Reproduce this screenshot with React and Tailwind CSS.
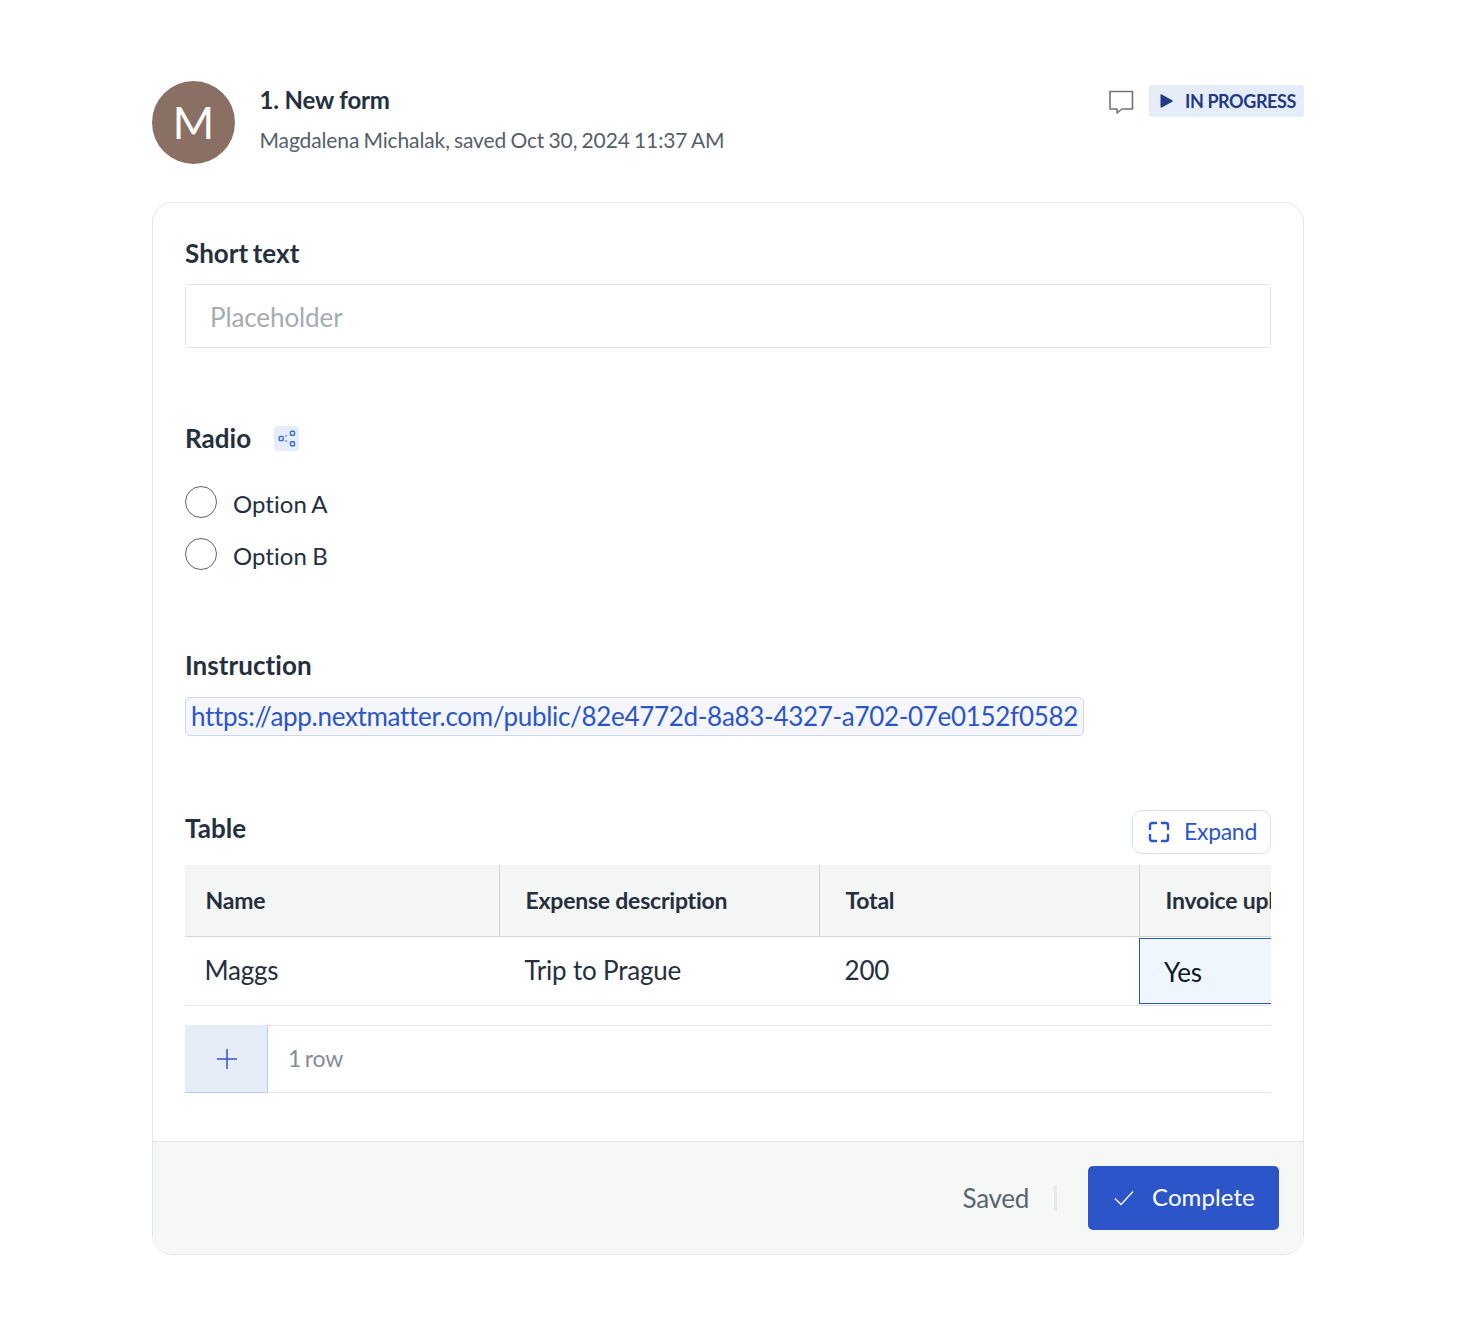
import React from "react";

function Label({ children }) {
  return <div className="text-[26px] leading-[30px] pb-[2px] font-bold text-[#252f3d] tracking-[0.05px] [word-spacing:-2px]">{children}</div>;
}

function Radio({ label }) {
  return (
    <div className="flex items-center h-[32px] gap-[16px]">
      <span className="w-[32px] h-[32px] rounded-full border border-[#5b6570] bg-white" />
      <span className="text-[24px] leading-[32px] text-[#252f3d] tracking-[0.05px] [word-spacing:-1px] mt-[4px]">{label}</span>
    </div>
  );
}

function HeadCell({ className, children }) {
  return (
    <div className={`shrink-0 h-full flex items-center pl-[25.5px] text-[23px] font-bold text-[#252f3d] tracking-[-0.22px] whitespace-nowrap border-r border-[#d2d5d7] ${className}`}>
      {children}
    </div>
  );
}

function BodyCell({ className, children }) {
  return (
    <div className={`shrink-0 h-full flex items-center pl-[24.5px] pb-[2px] text-[26px] text-[#252f3d] tracking-[-0.2px] ${className}`}>
      {children}
    </div>
  );
}

export default function App() {
  return (
    <div className="min-h-[1328px] bg-white pt-[81px] pl-[152px] pr-[158px] font-['Lato',sans-serif]">
      <header className="flex h-[83px]">
        <div className="w-[83px] h-[83px] rounded-full bg-[#8a6f64] flex items-center justify-center text-white text-[45px] shrink-0">M</div>
        <div className="ml-[24.5px] pt-[4px]">
          <div className="text-[24px] leading-[30px] pb-[2px] font-bold text-[#252f3d] tracking-[-0.15px]">1. New form</div>
          <div className="mt-[8px] text-[21px] leading-[30px] pb-[2px] text-[#56606b] tracking-[-0.12px] [word-spacing:-1px]">Magdalena Michalak, saved Oct 30, 2024 11:37 AM</div>
        </div>
        <div className="ml-auto flex items-start pt-[4px]">
          <svg className="mt-[4px] mr-[15px]" width="26" height="26" viewBox="0 0 26 26" fill="none" stroke="#6b7580" strokeWidth="1.6" strokeLinejoin="round">
            <path d="M2 2.5h22.5v17.5H14l-5 4v-4H2z" />
          </svg>
          <div className="h-[32px] w-[155px] rounded-[3px] bg-[#e6edf8] flex items-center pl-[11px] text-[#1f3b82] text-[18px] font-bold tracking-[-0.4px] whitespace-nowrap">
            <svg width="13" height="14" viewBox="0 0 13 14" fill="#1f3b82"><path d="M0.5 1.2c0-.7.7-1.1 1.3-.8l10.4 5.8c.6.4.6 1.2 0 1.6L1.8 13.6c-.6.3-1.3-.1-1.3-.8z" /></svg>
            <span className="ml-[12px]">IN PROGRESS</span>
          </div>
        </div>
      </header>

      <main className="mt-[38px] h-[1053px] rounded-[20px] border border-[#e4e7e9] overflow-hidden flex flex-col bg-white">
        <div className="flex-1 min-h-0 pl-[32px] pr-[32px] pt-[35px]">
          <Label>Short text</Label>
          <div className="mt-[14px] h-[64px] rounded-[4px] border border-[#e0e3e5] flex items-center pl-[24px] pt-[2px] text-[26px] text-[#a5acb3] tracking-[-0.1px]">Placeholder</div>

          <div className="mt-[75px] flex items-center">
            <Label>Radio</Label>
            <div className="ml-[23px] -mt-[1px] w-[25px] h-[25px] rounded-[4px] bg-[#e6edf8] flex items-center justify-center">
              <svg width="18" height="17" viewBox="0 0 18 17" fill="none" stroke="#3f6fd8" strokeWidth="1.4">
                <rect x="1.2" y="6.5" width="4" height="4" rx="0.8" />
                <rect x="12.5" y="1.2" width="4" height="4" rx="0.8" />
                <rect x="12.5" y="11.8" width="4" height="4" rx="0.8" />
                <path d="M7.5 6.5l2.5-2M7.5 10.5l2.5 2" strokeDasharray="1.5 1.5" />
              </svg>
            </div>
          </div>

          <div className="mt-[31px] flex flex-col gap-[20px]">
            <Radio label="Option A" />
            <Radio label="Option B" />
          </div>

          <div className="mt-[80px]"><Label>Instruction</Label></div>
          <div className="mt-[15px] inline-flex items-center h-[39px] px-[5px] rounded-[5px] border border-[#ccd6ee] bg-[#f4f6fc] text-[26px] text-[#2c55c9] tracking-[-0.31px] whitespace-nowrap">
            https://app.nextmatter.com/public/82e4772d-8a83-4327-a702-07e0152f0582
          </div>

          <div className="mt-[74px] flex items-start justify-between h-[55px]">
            <div className="mt-[3px]"><Label>Table</Label></div>
            <div className="w-[139px] h-[44px] rounded-[10px] border border-[#d3e0f7] flex items-center pl-[15px] pb-[2px] text-[#2c55c9] text-[23px] tracking-[-0.3px]">
              <svg className="mt-[2px]" width="22" height="22" viewBox="0 0 22 22" fill="none" stroke="#2c55c9" strokeWidth="2.4" strokeLinecap="round" strokeLinejoin="round">
                <path d="M2 8V4a2 2 0 0 1 2-2h4M14 2h4a2 2 0 0 1 2 2v4M20 14v4a2 2 0 0 1-2 2h-4M8 20H4a2 2 0 0 1-2-2v-4" />
              </svg>
              <span className="ml-[14px]">Expand</span>
            </div>
          </div>

          <div className="overflow-hidden">
            <div className="flex h-[72px] bg-[#f4f6f6] border-b border-[#d2d5d7]">
              <HeadCell className="w-[315px] !pl-[20.5px]">Name</HeadCell>
              <HeadCell className="w-[320px]">Expense description</HeadCell>
              <HeadCell className="w-[320px]">Total</HeadCell>
              <HeadCell className="w-[320px] border-r-0">Invoice upload</HeadCell>
            </div>
            <div className="flex h-[69px] border-b border-[#e4e7e9]">
              <BodyCell className="w-[315px] !pl-[19.5px]">Maggs</BodyCell>
              <BodyCell className="w-[320px]">Trip to Prague</BodyCell>
              <BodyCell className="w-[319px]">200</BodyCell>
              <div className="shrink-0 w-[320px] h-[66px] mt-[1px] border border-[#2c55c9] bg-[#eff6fe] flex items-center pl-[24px] pt-[2px] text-[26px] text-[#111827] tracking-[-0.2px]">Yes</div>
            </div>
          </div>

          <div className="mt-[19px] h-[68px] flex border-y border-[#e4e7e9]">
            <div className="w-[83px] -my-px pl-[2px] bg-[#e6edf8] border-r border-b border-[#b3ccf2] flex items-center justify-center">
              <svg width="22" height="22" viewBox="0 0 22 22" fill="none" stroke="#2c55c9" strokeWidth="1.5">
                <path d="M11 1v20M1 11h20" />
              </svg>
            </div>
            <div className="ml-[20px] flex items-center pb-[2px] text-[23px] text-[#858d96] tracking-[-0.2px] [word-spacing:-2px]">1 row</div>
          </div>
        </div>

        <footer className="h-[113px] shrink-0 bg-[#f6f8f8] border-t border-[#e4e7e9] flex items-center justify-end pr-[24px]">
          <span className="text-[26px] text-[#5b6570] tracking-[-0.3px]">Saved</span>
          <span className="ml-[25px] mr-[31px] w-[3px] h-[25px] bg-[#e6e9ea]" />
          <button className="w-[191px] h-[64px] rounded-[5px] bg-[#2c55c9] flex items-center pl-[26px] pb-[2px] text-white text-[24px] tracking-[0.1px]">
            <svg className="mt-[2px]" width="20" height="16" viewBox="0 0 20 16" fill="none" stroke="white" strokeWidth="1.3">
              <path d="M1 8.5l6 6L19 1.5" />
            </svg>
            <span className="ml-[18px]">Complete</span>
          </button>
        </footer>
      </main>
    </div>
  );
}
